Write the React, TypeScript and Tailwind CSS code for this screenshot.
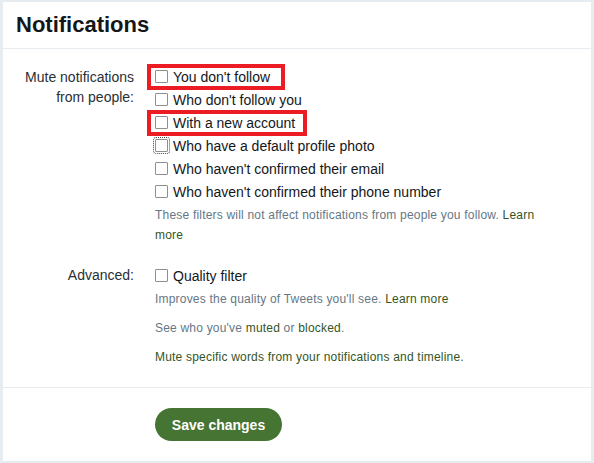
import React from "react";

const font = { fontFamily: '"Liberation Sans", Arial, sans-serif' };

function Box({ focus }: { focus?: boolean }) {
  return (
    <span
      className={
        "block w-[13px] h-[13px] shrink-0 border border-[#8f8f8f] bg-white rounded-[1px] " +
        (focus ? "outline outline-1 outline-dotted outline-[#444] outline-offset-[1px]" : "")
      }
    />
  );
}

function Option({
  label,
  focus,
  mark,
}: {
  label: string;
  focus?: boolean;
  mark?: string;
}) {
  return (
    <div className="h-[23px] flex items-center">
      <div className="relative flex items-center gap-[5px]">
        {mark && (
          <span
            className={
              "absolute -left-[8px] -top-[3px] h-[26px] border-[4px] border-[#ec1c24] " +
              mark
            }
          />
        )}
        <Box focus={focus} />
        <span className="relative text-[14px] leading-[20px] text-[#14171a]">{label}</span>
      </div>
    </div>
  );
}

export default function App() {
  return (
    <div className="w-[594px] h-[463px] bg-[#e6ecf0] pt-[2px] pl-[3px] pr-[3px] pb-[2px]" style={font}>
      <div className="bg-white h-[459px] flex flex-col">
        <div className="h-[47px] border-b border-[#e6ecf0] flex items-center pl-[13px]">
          <h1 className="text-[22px] font-bold text-[#14171a] leading-none">Notifications</h1>
        </div>

        <div className="pt-[16px] pb-[20px] border-b border-[#e6ecf0]">
          <div className="flex">
            <div className="w-[131px] shrink-0 text-right text-[14px] leading-[20px] text-[#292f33] pt-[2px]">
              Mute notifications
              <br />
              from people:
            </div>
            <div className="ml-[21px] flex-1 pr-[36px]">
              <Option label="You don't follow" mark="w-[138px]" />
              <Option label="Who don't follow you" />
              <Option label="With a new account" mark="w-[160px]" />
              <Option label="Who have a default profile photo" focus />
              <Option label="Who haven't confirmed their email" />
              <Option label="Who haven't confirmed their phone number" />
              <p className="mt-[2px] text-[12px] leading-[20px] tracking-[0.2px] text-[#657786]">
                These filters will not affect notifications from people you follow.{" "}
                <span className="text-[#33561f]">Learn more</span>
              </p>
            </div>
          </div>

          <div className="flex mt-[19px]">
            <div className="w-[131px] shrink-0 text-right text-[14px] leading-[23px] text-[#292f33]">
              Advanced:
            </div>
            <div className="ml-[21px] flex-1 pr-[36px]">
              <Option label="Quality filter" />
              <p className="mt-[2px] text-[12px] leading-[20px] tracking-[0.2px] text-[#657786]">
                Improves the quality of Tweets you'll see.{" "}
                <span className="text-[#33561f]">Learn more</span>
              </p>
              <p className="mt-[9px] text-[12px] leading-[20px] tracking-[0.2px] text-[#657786]">
                See who you've <span className="text-[#33561f]">muted</span> or{" "}
                <span className="text-[#33561f]">blocked</span>.
              </p>
              <p className="mt-[9px] text-[12px] leading-[20px] tracking-[0.2px] text-[#33561f]">
                Mute specific words from your notifications and timeline.
              </p>
            </div>
          </div>
        </div>

        <div className="pt-[20px] pl-[152px]">
          <button className="w-[127px] h-[33px] rounded-full bg-[#467432] text-white text-[14px] font-bold leading-none">
            Save changes
          </button>
        </div>
      </div>
    </div>
  );
}
